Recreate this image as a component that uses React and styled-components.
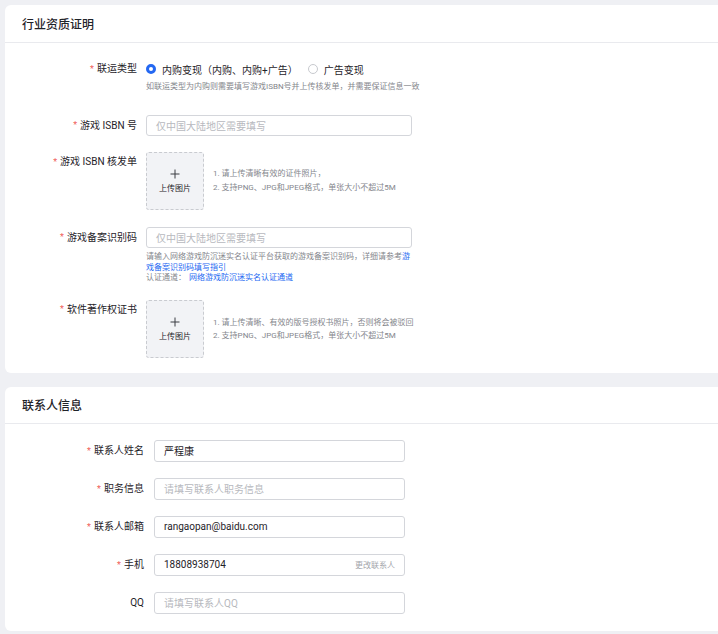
import React from 'react';
import styled, { createGlobalStyle } from 'styled-components';

const GlobalStyle = createGlobalStyle`
  html, body {
    margin: 0;
    padding: 0;
    background: #eff0f4;
    font-family: Roboto, "Noto Sans CJK SC", sans-serif;
    color: #1f2329;
  }
`;

const Page = styled.div`
  padding: 5px 0 4px 5px;
  display: flex;
  flex-direction: column;
  gap: 14px;
`;

const Card = styled.section`
  background: #fff;
  border-radius: 6px 0 0 6px;
`;

const CardHeader = styled.div`
  height: ${(p) => p.$height}px;
  display: flex;
  align-items: center;
  padding-left: 17px;
  border-bottom: 1px solid #e9eaee;
  font-size: 12px;
  font-weight: 500;
  color: #1f2329;
`;

const CardBody = styled.div`
  padding: ${(p) => p.$padding};
  display: flex;
  flex-direction: column;
  gap: ${(p) => p.$gap || 0}px;
`;

const Item = styled.div`
  display: flex;
  align-items: flex-start;
  margin-bottom: ${(p) => p.$mb || 0}px;
`;

const Label = styled.div`
  width: ${(p) => p.$width}px;
  margin-right: ${(p) => p.$gap}px;
  flex-shrink: 0;
  text-align: right;
  font-size: 10px;
  line-height: ${(p) => p.$lh}px;
  color: #1f2329;
  white-space: nowrap;
`;

const Star = styled.span`
  color: #f0605a;
  font-size: 9px;
  margin-right: 3px;
  vertical-align: top;
`;

const Control = styled.div`
  width: ${(p) => p.$width}px;
  display: flex;
  flex-direction: column;
`;

const RadioGroup = styled.div`
  height: 20px;
  display: flex;
  align-items: center;
  gap: 10px;
`;

const RadioOption = styled.label`
  display: flex;
  align-items: center;
  gap: 6px;
  font-size: 10px;
  color: #1f2329;
  white-space: nowrap;
`;

const RadioDot = styled.span`
  width: 10px;
  height: 10px;
  box-sizing: border-box;
  border-radius: 50%;
  border: ${(p) => (p.$checked ? '3px solid #2468f2' : '1px solid #c7c9ce')};
  background: #fff;
`;

const Help = styled.div`
  margin-top: ${(p) => p.$mt || 0}px;
  font-size: 8px;
  line-height: ${(p) => p.$lh || 12}px;
  color: #84868c;
  white-space: ${(p) => (p.$nowrap ? 'nowrap' : 'normal')};
`;

const Link = styled.a`
  color: #2468f2;
  text-decoration: none;
  margin-left: ${(p) => p.$ml || 0}px;
`;

const Input = styled.div`
  height: ${(p) => p.$height}px;
  box-sizing: border-box;
  border: 1px solid #d4d6db;
  border-radius: 3px;
  display: flex;
  align-items: center;
  justify-content: space-between;
  padding: 0 9px;
  font-size: 10px;
  color: ${(p) => (p.$placeholder ? '#b7b9be' : '#1f2329')};
`;

const Suffix = styled.span`
  font-size: 8px;
  color: #a3a5ab;
`;

const UploadRow = styled.div`
  display: flex;
  align-items: center;
  gap: 9px;
`;

const UploadBox = styled.div`
  width: 58px;
  height: 58px;
  box-sizing: border-box;
  border: 1px dashed #c9cbd0;
  border-radius: 3px;
  background: #f2f3f6;
  display: flex;
  flex-direction: column;
  align-items: center;
  justify-content: center;
  gap: 3px;
  font-size: 8px;
  color: #1f2329;
`;

const Hints = styled.div`
  font-size: 8px;
  line-height: ${(p) => p.$lh}px;
  color: #84868c;
  white-space: nowrap;
`;

const PlusIcon = () => (
  <svg width="10" height="10" viewBox="0 0 10 10">
    <path d="M5 0.5v9M0.5 5h9" stroke="#3a3c42" strokeWidth="1" />
  </svg>
);

const Upload = ({ hints, lh }) => (
  <UploadRow>
    <UploadBox>
      <PlusIcon />
      <span>上传图片</span>
    </UploadBox>
    <Hints $lh={lh}>
      {hints.map((h) => (
        <div key={h}>{h}</div>
      ))}
    </Hints>
  </UploadRow>
);

const L1 = (props) => <Label $width={132} $gap={9} {...props} />;
const L2 = (props) => <Label $width={139} $gap={10} $lh={22} {...props} />;

const contacts = [
  { label: '联系人姓名', value: '严程康', required: true },
  { label: '职务信息', placeholder: '请填写联系人职务信息', required: true },
  { label: '联系人邮箱', value: 'rangaopan@baidu.com', required: true },
  { label: '手机', value: '18808938704', required: true, suffix: '更改联系人' },
  { label: 'QQ', placeholder: '请填写联系人QQ' },
];

export default function App() {
  return (
    <>
      <GlobalStyle />
      <Page>
        <Card>
          <CardHeader $height={37}>行业资质证明</CardHeader>
          <CardBody $padding="16px 0 15px 0">
            <Item $mb={22}>
              <L1 $lh={20}><Star>*</Star>联运类型</L1>
              <Control $width={266}>
                <RadioGroup>
                  <RadioOption>
                    <RadioDot $checked />
                    内购变现（内购、内购+广告）
                  </RadioOption>
                  <RadioOption>
                    <RadioDot />
                    广告变现
                  </RadioOption>
                </RadioGroup>
                <Help $mt={2} $nowrap>
                  如联运类型为内购则需要填写游戏ISBN号并上传核发单，并需要保证信息一致
                </Help>
              </Control>
            </Item>

            <Item $mb={16}>
              <L1 $lh={21}><Star>*</Star>游戏 ISBN 号</L1>
              <Control $width={266}>
                <Input $height={21} $placeholder>仅中国大陆地区需要填写</Input>
              </Control>
            </Item>

            <Item $mb={17}>
              <L1 $lh={20}><Star>*</Star>游戏 ISBN 核发单</L1>
              <Control $width={300}>
                <Upload
                  lh={14}
                  hints={['1. 请上传清晰有效的证件照片，', '2. 支持PNG、JPG和JPEG格式，单张大小不超过5M']}
                />
              </Control>
            </Item>

            <Item $mb={16}>
              <L1 $lh={21}><Star>*</Star>游戏备案识别码</L1>
              <Control $width={266}>
                <Input $height={21} $placeholder>仅中国大陆地区需要填写</Input>
                <Help $mt={4} $lh={10.5}>
                  请输入网络游戏防沉迷实名认证平台获取的游戏备案识别码，详细请参考
                  <Link href="#">游戏备案识别码填写指引</Link>
                  <br />
                  认证通道：<Link href="#" $ml={3}>网络游戏防沉迷实名认证通道</Link>
                </Help>
              </Control>
            </Item>

            <Item>
              <L1 $lh={19}><Star>*</Star>软件著作权证书</L1>
              <Control $width={300}>
                <Upload
                  lh={13}
                  hints={['1. 请上传清晰、有效的版号授权书照片，否则将会被驳回', '2. 支持PNG、JPG和JPEG格式，单张大小不超过5M']}
                />
              </Control>
            </Item>
          </CardBody>
        </Card>

        <Card>
          <CardHeader $height={36}>联系人信息</CardHeader>
          <CardBody $padding="16px 0 17px 0" $gap={16}>
            {contacts.map((c) => (
              <Item key={c.label}>
                <L2>
                  {c.required && <Star>*</Star>}
                  {c.label}
                </L2>
                <Control $width={251}>
                  <Input $height={22} $placeholder={!c.value}>
                    <span>{c.value || c.placeholder}</span>
                    {c.suffix && <Suffix>{c.suffix}</Suffix>}
                  </Input>
                </Control>
              </Item>
            ))}
          </CardBody>
        </Card>
      </Page>
    </>
  );
}
